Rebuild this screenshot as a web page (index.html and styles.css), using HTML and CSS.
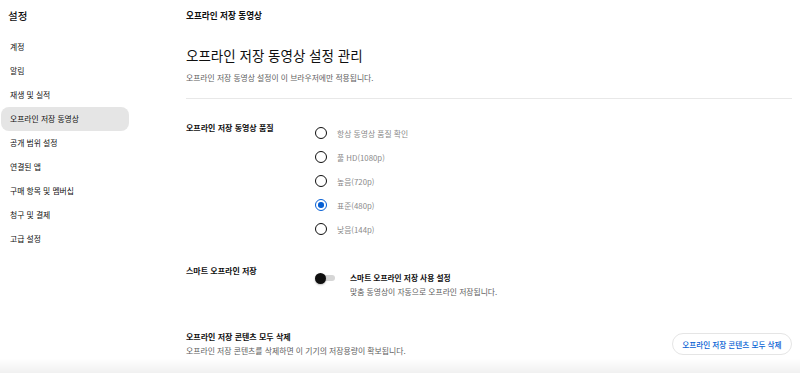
FILE: index.html
```html
<!DOCTYPE html>
<html lang="ko">
<head>
<meta charset="utf-8">
<title>설정 - 오프라인 저장 동영상</title>
<link rel="stylesheet" href="styles.css">
</head>
<body>
<div class="app">
  <nav class="sidebar">
    <div class="side-title">설정</div>
    <ul class="side-list">
      <li class="side-item">계정</li>
      <li class="side-item">알림</li>
      <li class="side-item">재생 및 실적</li>
      <li class="side-item active">오프라인 저장 동영상</li>
      <li class="side-item">공개 범위 설정</li>
      <li class="side-item">연결된 앱</li>
      <li class="side-item">구매 항목 및 멤버십</li>
      <li class="side-item">청구 및 결제</li>
      <li class="side-item">고급 설정</li>
    </ul>
  </nav>
  <main class="main">
    <div class="crumb">오프라인 저장 동영상</div>
    <h1 class="heading">오프라인 저장 동영상 설정 관리</h1>
    <p class="intro">오프라인 저장 동영상 설정이 이 브라우저에만 적용됩니다.</p>
    <hr class="divider">

    <section class="row quality">
      <div class="row-label">오프라인 저장 동영상 품질</div>
      <div class="options">
        <label class="option"><span class="radio"></span><span class="opt-text">항상 동영상 품질 확인</span></label>
        <label class="option"><span class="radio"></span><span class="opt-text">풀 HD(1080p)</span></label>
        <label class="option"><span class="radio"></span><span class="opt-text">높음(720p)</span></label>
        <label class="option"><span class="radio checked"></span><span class="opt-text">표준(480p)</span></label>
        <label class="option"><span class="radio"></span><span class="opt-text">낮음(144p)</span></label>
      </div>
    </section>

    <section class="row smart">
      <div class="row-label">스마트 오프라인 저장</div>
      <div class="smart-body">
        <span class="toggle"><span class="track"><span class="thumb"></span></span></span>
        <div class="smart-text">
          <div class="smart-title">스마트 오프라인 저장 사용 설정</div>
          <div class="smart-sub">맞춤 동영상이 자동으로 오프라인 저장됩니다.</div>
        </div>
      </div>
    </section>

    <section class="delete">
      <div class="delete-text">
        <div class="delete-title">오프라인 저장 콘텐츠 모두 삭제</div>
        <div class="delete-sub">오프라인 저장 콘텐츠를 삭제하면 이 기기의 저장용량이 확보됩니다.</div>
      </div>
      <button class="delete-btn">오프라인 저장 콘텐츠 모두 삭제</button>
    </section>
  </main>
</div>
<div class="bottom-fade"></div>
</body>
</html>
```

FILE: styles.css
```css
* { box-sizing: border-box; }

html, body {
  margin: 0;
  padding: 0;
  background: #ffffff;
  color: #0f0f0f;
  font-family: "Noto Sans CJK KR", "Noto Sans", sans-serif;
  overflow: hidden;
}

.app {
  display: flex;
  align-items: flex-start;
  height: 373px;
}

/* Sidebar */
.sidebar {
  width: 130px;
  flex: none;
  padding-left: 1px;
}

.side-title {
  height: 32px;
  line-height: 32px;
  padding-left: 7px;
  font-size: 10.5px;
  font-weight: 500;
  margin-bottom: 3px;
}

.side-list {
  list-style: none;
  margin: 0;
  padding: 0;
}

.side-item {
  width: 128px;
  height: 24px;
  line-height: 24px;
  padding-left: 9px;
  font-size: 7.8px;
  color: #0f0f0f;
  border-radius: 8px;
}

.side-item.active {
  background: #e5e5e5;
}

/* Main */
.main {
  margin-left: 56px;
  width: 606px;
  flex: none;
}

.crumb {
  height: 30px;
  line-height: 30px;
  font-size: 8.6px;
  font-weight: 700;
}

.heading {
  margin: 15px 0 0;
  height: 20px;
  line-height: 20px;
  font-size: 13.5px;
  font-weight: 400;
}

.intro {
  margin: 7px 0 0;
  height: 12px;
  line-height: 12px;
  font-size: 7.8px;
  color: #606060;
}

.divider {
  margin: 14px 0 0;
  border: 0;
  height: 1px;
  background: #e8e8e8;
}

.row {
  display: flex;
  align-items: flex-start;
}

.row-label {
  width: 129px;
  flex: none;
  line-height: 14px;
  font-size: 8px;
  font-weight: 700;
}

.quality {
  margin-top: 22px;
}

.options {
  display: flex;
  flex-direction: column;
}

.option {
  display: flex;
  align-items: center;
  height: 24px;
  gap: 10px;
}

.radio {
  width: 12px;
  height: 12px;
  border: 1.6px solid #0f0f0f;
  border-radius: 50%;
  display: flex;
  align-items: center;
  justify-content: center;
}

.radio.checked {
  border-color: #065fd4;
}

.radio.checked::after {
  content: "";
  width: 5.5px;
  height: 5.5px;
  border-radius: 50%;
  background: #065fd4;
}

.opt-text {
  font-size: 7.8px;
  color: #8a8a8a;
}

/* Smart download */
.smart {
  margin-top: 23px;
}

.smart-body {
  display: flex;
  align-items: flex-start;
  padding-top: 7px;
}

.toggle {
  width: 20px;
  height: 14px;
  display: flex;
  align-items: center;
  margin-right: 15px;
}

.track {
  width: 17px;
  height: 6px;
  margin-left: 3px;
  border-radius: 3px;
  background: #d6d6d6;
  display: flex;
  align-items: center;
}

.thumb {
  width: 11px;
  height: 11px;
  flex: none;
  margin-left: -3px;
  border-radius: 50%;
  background: #0f0f0f;
  box-shadow: 0 1px 2px rgba(0, 0, 0, 0.25);
}

.smart-title {
  line-height: 14px;
  font-size: 7.7px;
  font-weight: 700;
}

.smart-sub {
  line-height: 14px;
  font-size: 7.8px;
  color: #606060;
}

/* Delete */
.delete {
  margin-top: 31px;
  display: flex;
  align-items: center;
  justify-content: space-between;
}

.delete-title {
  line-height: 14px;
  font-size: 8px;
  font-weight: 700;
}

.delete-sub {
  line-height: 14px;
  font-size: 7.85px;
  color: #606060;
}

.delete-btn {
  height: 22px;
  padding: 0 9.5px;
  border: 1px solid #e5e5e5;
  border-radius: 11px;
  background: #ffffff;
  color: #065fd4;
  font-family: "Noto Sans CJK KR", "Noto Sans", sans-serif;
  font-size: 7.6px;
  font-weight: 500;
  white-space: nowrap;
}

.bottom-fade {
  position: fixed;
  left: 0;
  right: 0;
  bottom: 0;
  height: 14px;
  background: linear-gradient(to bottom, rgba(0, 0, 0, 0), rgba(0, 0, 0, 0.06));
  pointer-events: none;
}
```
